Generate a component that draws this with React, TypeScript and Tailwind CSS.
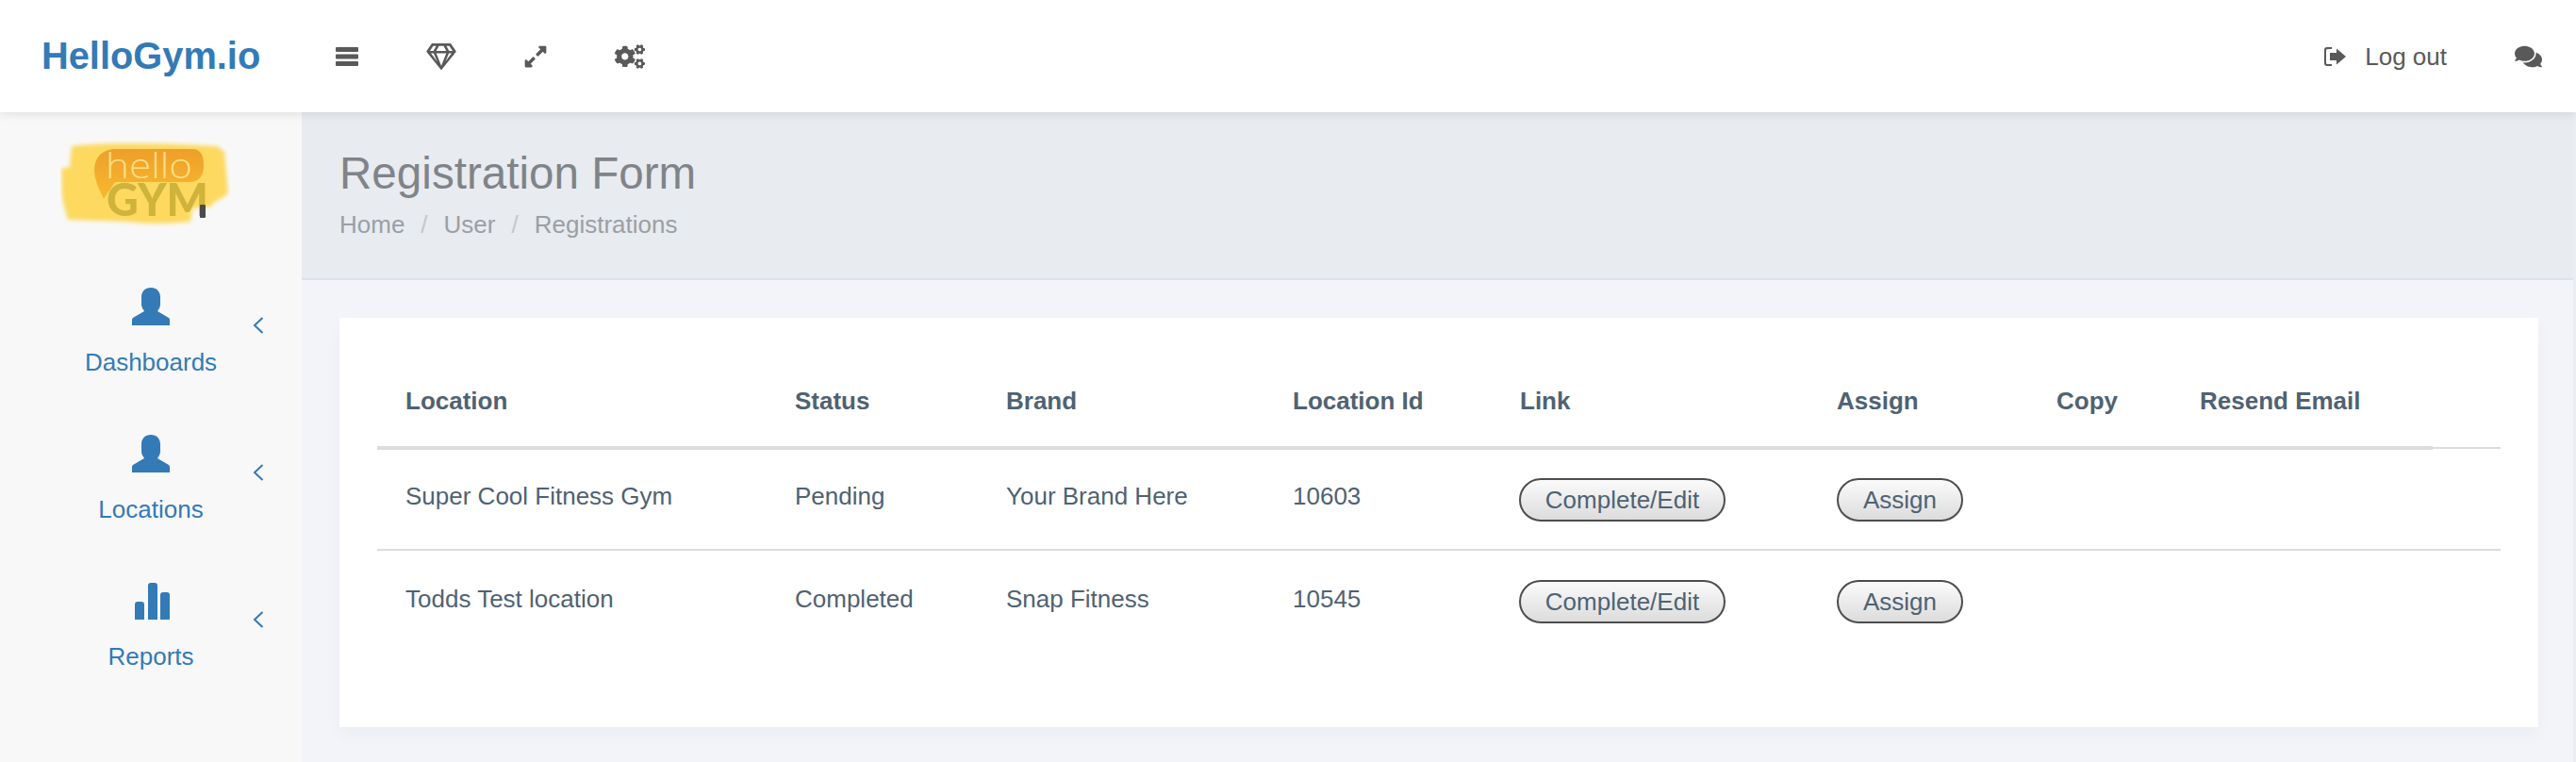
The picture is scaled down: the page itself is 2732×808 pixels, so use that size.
import { FaCogs, FaComments, FaExpandAlt, FaRegGem } from "react-icons/fa";

const NAV = [
  { label: "Dashboards", icon: "user" },
  { label: "Locations", icon: "user" },
  { label: "Reports", icon: "stats" },
];

const COLUMNS = [
  { label: "Location", width: "w-[413px]" },
  { label: "Status", width: "w-[224px]" },
  { label: "Brand", width: "w-[304px]" },
  { label: "Location Id", width: "w-[241px]" },
  { label: "Link", width: "w-[336px]" },
  { label: "Assign", width: "w-[233px]" },
  { label: "Copy", width: "w-[152px]" },
  { label: "Resend Email", width: "w-[277px]" },
];

const ROWS = [
  { location: "Super Cool Fitness Gym", status: "Pending", brand: "Your Brand Here", id: "10603", textPad: "pt-[31px]", btnPad: "pt-[30px]" },
  { location: "Todds Test location", status: "Completed", brand: "Snap Fitness", id: "10545", textPad: "pt-[33px]", btnPad: "pt-[31px]" },
];

function UserIcon() {
  return (
    <svg viewBox="0 0 40 40" className="h-10 w-10 fill-[#337ab7]">
      <path d="M20 0C26 0 30 4 30 10V18C30 21 28 23 27 25L39 32Q40 33 40 34V40H0V34Q0 33 1 32L13 25C12 23 10 21 10 18V10C10 4 14 0 20 0Z" />
    </svg>
  );
}

function StatsIcon() {
  return (
    <svg viewBox="0 0 40 40" className="h-10 w-10 fill-[#337ab7]">
      <path d="M3 40V24Q3 21 6 21H10Q13 21 13 24V40Z" />
      <path d="M17 40V4Q17 1 20 1H24Q27 1 27 4V40Z" />
      <path d="M30 40V14Q30 11 33 11H37Q40 11 40 14V40Z" />
    </svg>
  );
}

function BarsIcon() {
  return (
    <svg viewBox="0 0 24 20" className="h-5 w-6 fill-[#595959]">
      <rect y="0" width="24" height="5" rx="1" />
      <rect y="7.5" width="24" height="5" rx="1" />
      <rect y="15" width="24" height="5" rx="1" />
    </svg>
  );
}

function Logo() {
  return (
    <svg viewBox="0 0 180 92" className="h-[92px] w-[180px]">
      <defs>
        <filter id="soft" x="-10%" y="-10%" width="120%" height="120%">
          <feGaussianBlur stdDeviation="2" />
        </filter>
        <filter id="softer" x="-10%" y="-10%" width="120%" height="120%">
          <feGaussianBlur stdDeviation="0.6" />
        </filter>
        <linearGradient id="bubble" x1="0" y1="0" x2="0" y2="1">
          <stop offset="0" stopColor="#ee9f2b" />
          <stop offset="1" stopColor="#f8b92f" />
        </linearGradient>
      </defs>
      <path
        d="M12 6Q60 0 166 6L174 12L178 56L170 62L162 66L160 70L140 72L138 86Q100 90 70 86L8 84L2 62L1 30L10 28Z"
        fill="#fdd95f"
        filter="url(#soft)"
      />
      <path
        d="M56 9H140Q152 9 152 26Q152 43 138 44H76L58 44L46 62Q36 42 36 32Q36 12 56 9Z"
        fill="url(#bubble)"
        filter="url(#softer)"
      />
      <text
        x="48"
        y="40"
        fontSize="37"
        fontFamily="'Open Sans', sans-serif"
        fontWeight="300"
        fill="#fddf85"
        textLength="92"
        lengthAdjust="spacingAndGlyphs"
      >
        hello
      </text>
      <text
        x="49"
        y="80"
        fontSize="47"
        fontFamily="Lato, sans-serif"
        fontWeight="900"
        fill="#cfb33a"
        textLength="108"
        lengthAdjust="spacingAndGlyphs"
        filter="url(#softer)"
      >
        GYM
      </text>
      <rect x="148" y="68" width="6" height="14" rx="1" fill="#4b4b4b" />
    </svg>
  );
}

function LogoutIcon() {
  return (
    <svg viewBox="0 0 23 20" className="h-5 w-[23px] fill-[#595959]">
      <path d="M3 0H8V2H3.5Q2 2 2 3.5V16.5Q2 18 3.5 18H8V20H3Q0 20 0 17V3Q0 0 3 0Z" />
      <path d="M6 6H13V1.5L23 10L13 18.5V14H6Z" />
    </svg>
  );
}

function PillButton({ label, width }: { label: string; width: string }) {
  return (
    <button
      className={`h-[46px] ${width} rounded-[23px] border-2 border-[#4d4d4d] bg-gradient-to-b from-[#fbfbfb] to-[#dcdcdc] text-[26px] leading-none text-[#4f6272]`}
    >
      {label}
    </button>
  );
}

export default function App() {
  return (
    <div className="flex h-[808px] w-[2732px] flex-col overflow-hidden bg-[#f2f4f9] font-['Liberation_Sans',Arial,sans-serif] text-[26px] text-[#4f6272]">
      <header className="relative z-10 flex h-[119px] shrink-0 items-center bg-white pr-9 shadow-[0_2px_10px_rgba(0,0,0,0.10)]">
        <div className="w-[318px] pl-[44px] text-[39.8px] font-bold text-[#337ab7]">HelloGym.io</div>
        <nav className="flex items-center text-[#595959]">
          <div className="flex w-[100px] justify-center">
            <BarsIcon />
          </div>
          <div className="flex w-[100px] justify-center">
            <FaRegGem className="h-[28px] w-[32px]" />
          </div>
          <div className="flex w-[100px] justify-center">
            <FaExpandAlt className="h-[26px] w-[26px]" />
          </div>
          <div className="flex w-[100px] justify-center">
            <FaCogs className="h-[30px] w-[32px]" />
          </div>
        </nav>
        <div className="ml-auto flex items-center text-[#595959]">
          <LogoutIcon />
          <span className="mt-[2px] ml-[20px] mr-[72px]">Log out</span>
          <FaComments className="h-[26px] w-[29px]" />
        </div>
      </header>

      <div className="flex flex-1">
        <aside className="w-[320px] shrink-0 bg-[#f8f8f8]">
          <div className="flex h-[186px] justify-center pt-[30px] pr-[12px]">
            <Logo />
          </div>
          {NAV.map((item) => (
            <div key={item.label} className="grid h-[156px] grid-cols-[80px_160px_80px] text-[#337ab7]">
              <div className="col-start-2 flex flex-col items-center">
                {item.icon === "user" ? <UserIcon /> : <StatsIcon />}
                <span className="mt-[20px] whitespace-nowrap">{item.label}</span>
              </div>
              <svg viewBox="0 0 12 18" className="mt-[31px] ml-[28px] h-[18px] w-[12px] fill-none stroke-[#337ab7] stroke-[2]">
                <path d="M10.5 1L2 9L10.5 17" />
              </svg>
            </div>
          ))}
        </aside>

        <main className="flex min-w-0 flex-1 flex-col">
          <div className="h-[178px] shrink-0 border-b-2 border-[#dfe3e9] bg-[#e8ebf0] pt-[38px] pl-[40px]">
            <h1 className="text-[47.6px] leading-[54px] font-light text-[#7f8488]">Registration Form</h1>
            <div className="mt-[8px] flex items-center text-[#9a9fa4]">
              <span>Home</span>
              <span className="mx-[17px] text-[#c4c8cc]">/</span>
              <span>User</span>
              <span className="mx-[17px] text-[#c4c8cc]">/</span>
              <span>Registrations</span>
            </div>
          </div>

          <div className="flex flex-1 pt-[40px] pr-[40px] pl-[40px]">
            <div className="h-[434px] flex-1 bg-white px-[40px] pt-[40px] shadow-[0_8px_16px_rgba(0,0,0,0.03)]">
              <table className="w-[2252px] table-fixed border-collapse text-left">
                <thead>
                  <tr className="h-[98px]">
                    {COLUMNS.map((col) => (
                      <th
                        key={col.label}
                        className={`${col.width} border-b-4 border-[#dcdcdc] pl-[30px] font-bold whitespace-nowrap`}
                      >
                        {col.label}
                      </th>
                    ))}
                    <th className="border-b-2 border-[#dcdcdc]" />
                  </tr>
                </thead>
                <tbody>
                  {ROWS.map((row, i) => (
                    <tr key={row.id} className={i === 0 ? "border-b-2 border-[#dcdcdc]" : ""}>
                      <td className={`h-[108px] ${row.textPad} pl-[30px] align-top leading-[37px]`}>{row.location}</td>
                      <td className={`${row.textPad} pl-[30px] align-top leading-[37px]`}>{row.status}</td>
                      <td className={`${row.textPad} pl-[30px] align-top leading-[37px]`}>{row.brand}</td>
                      <td className={`${row.textPad} pl-[30px] align-top leading-[37px]`}>{row.id}</td>
                      <td className={`${row.btnPad} pl-[29px] align-top`}>
                        <PillButton label="Complete/Edit" width="w-[219px]" />
                      </td>
                      <td className={`${row.btnPad} pl-[30px] align-top`}>
                        <PillButton label="Assign" width="w-[134px]" />
                      </td>
                      <td />
                      <td />
                      <td />
                    </tr>
                  ))}
                </tbody>
              </table>
            </div>
          </div>
        </main>
        <div className="w-[3px] shrink-0 bg-[#ebedf2]" />
      </div>
    </div>
  );
}
